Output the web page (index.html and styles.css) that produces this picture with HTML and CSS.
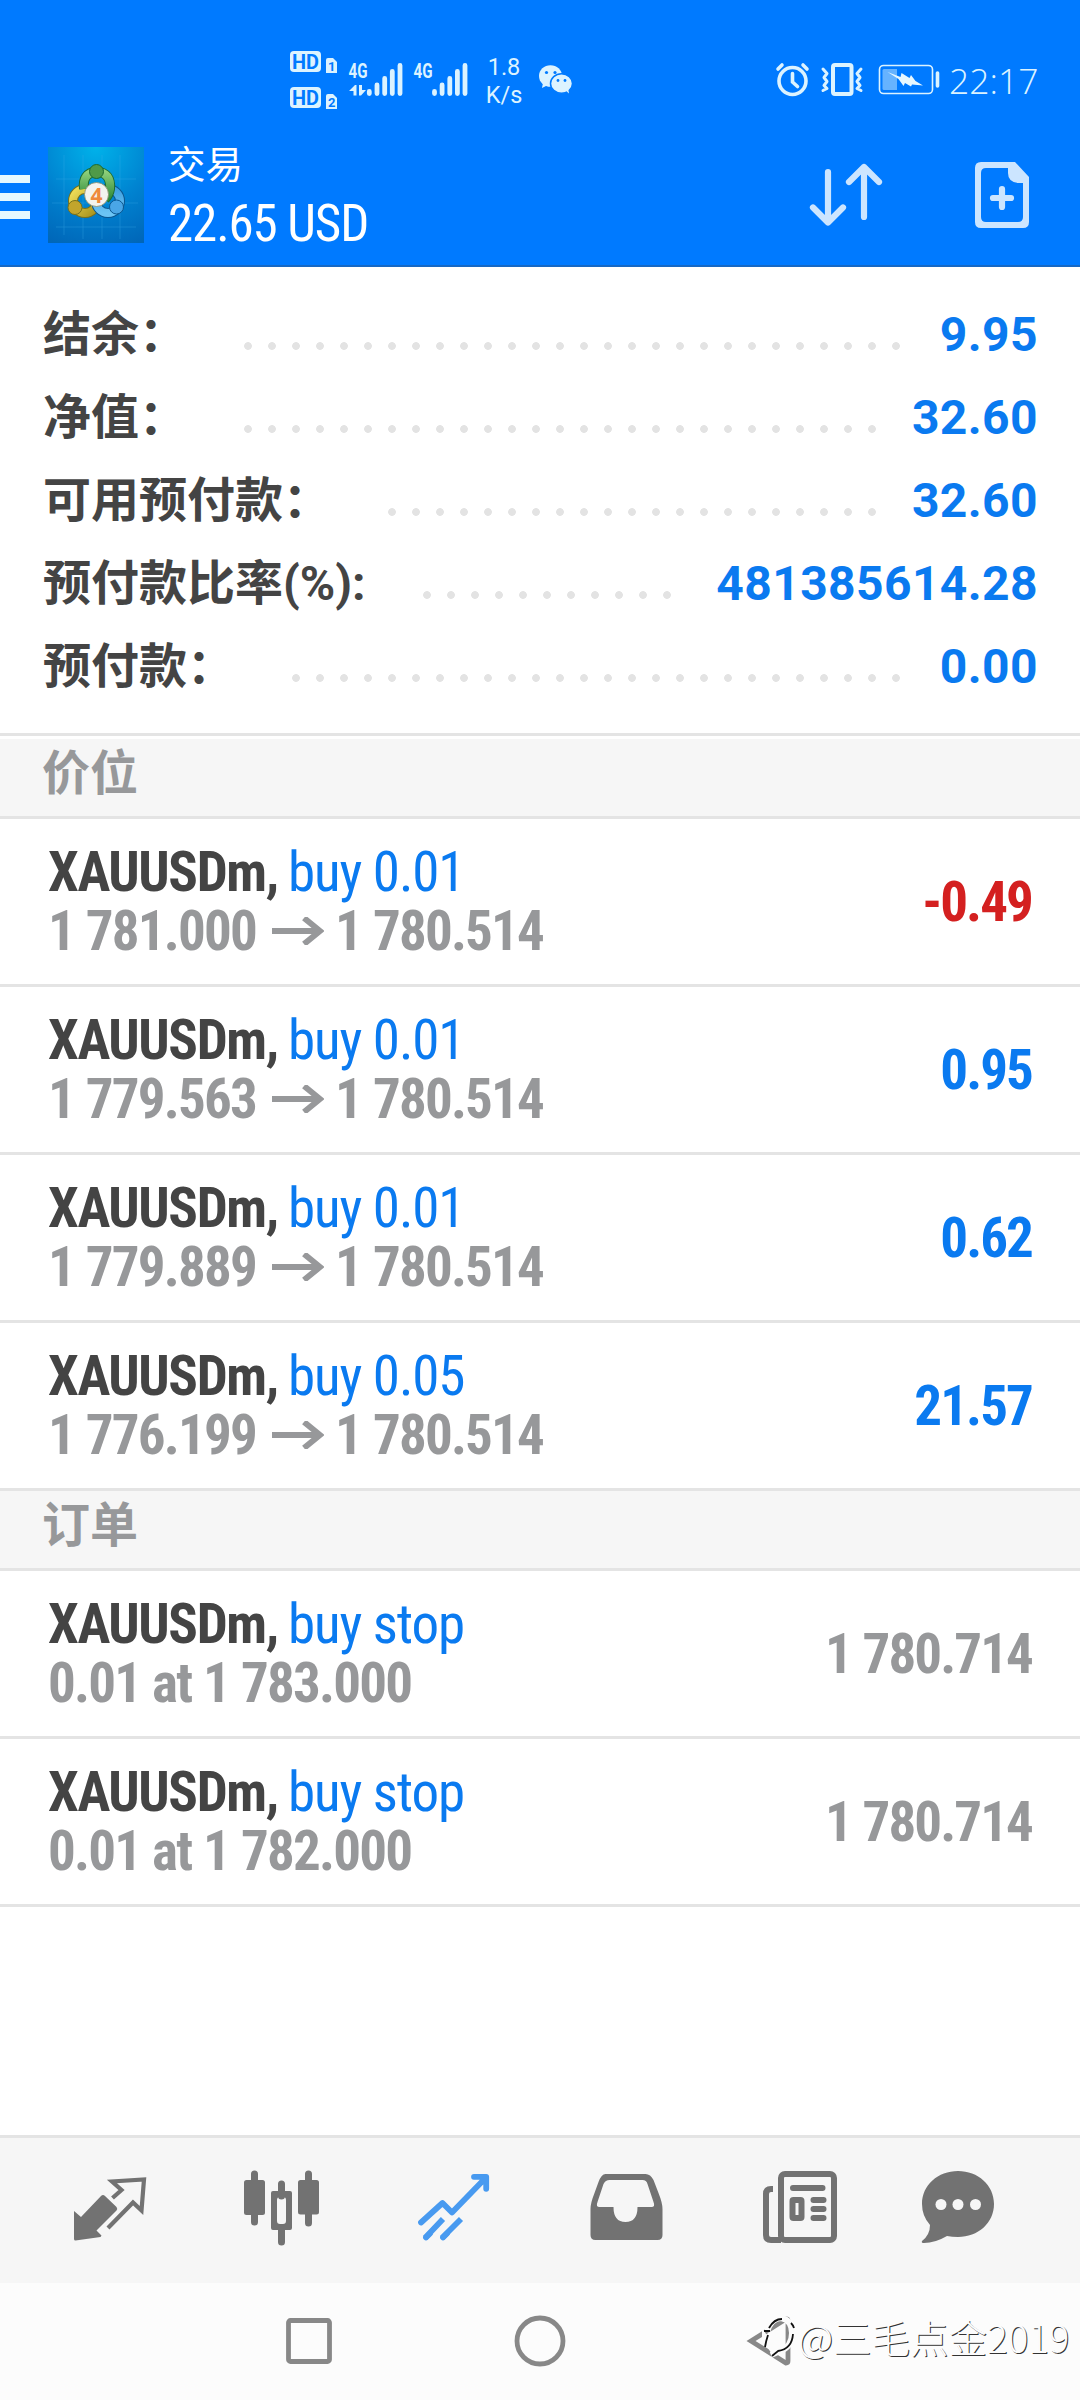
FILE: index.html
```html
<!DOCTYPE html>
<html lang="zh-CN">
<head>
<meta charset="utf-8">
<title>交易</title>
<link rel="stylesheet" href="styles.css">
</head>
<body>
<div class="app">
  <header class="header">
    <div class="status">
      <svg class="status-left" width="320" height="80" viewBox="280 40 320 80">
        <g fill="#dcf3ff">
          <rect x="290" y="51" width="31" height="21" rx="4"/>
          <rect x="290" y="87" width="31" height="21" rx="4"/>
          <path d="M326 60q0-2 2-2h5l4 4v11h-11z"/>
          <path d="M326 96q0-2 2-2h5l4 4v11h-11z"/>
        </g>
        <g class="badge-text">
          <text x="292" y="69" font-size="21" textLength="27" lengthAdjust="spacingAndGlyphs">HD</text>
          <text x="292" y="105" font-size="21" textLength="27" lengthAdjust="spacingAndGlyphs">HD</text>
          <text x="328" y="71" font-size="13">1</text>
          <text x="328" y="107" font-size="13">2</text>
        </g>
        <g class="net-text">
          <text x="348.500" y="78" font-size="20" textLength="19" lengthAdjust="spacingAndGlyphs">4G</text>
          <text x="413.500" y="78" font-size="20" textLength="19" lengthAdjust="spacingAndGlyphs">4G</text>
        </g>
        <path d="M349 91l6-6h1.500v10.500H353.500V91zM359 85h3v5h4l-5 5.500h-2z" fill="#dcf3ff"/>
        <path d="M369.300 91.500v2M377 85v8.500M384.700 78.500v15M392.300 71.500v22M400 65.500v28M434.500 91.500v2M442.100 85v8.500M449.800 78.500v15M457.400 71.500v22M465 65.500v28" stroke="#dcf3ff" stroke-width="4.800" stroke-linecap="round"/>
        <g class="speed-text">
          <text x="504" y="75" font-size="23.500" text-anchor="middle">1.8</text>
          <text x="504" y="103" font-size="23.500" text-anchor="middle">K/s</text>
        </g>
        <g fill="#dcf3ff">
          <ellipse cx="550.500" cy="76" rx="11.500" ry="10.800"/>
          <path d="M543 83l-1 5 6-3z"/>
          <ellipse cx="561.500" cy="83.500" rx="11" ry="9.800" stroke="#007aff" stroke-width="1.500"/>
          <path d="M565 90l4 3.500-1-6z"/>
        </g>
        <g fill="#007aff"><circle cx="546.500" cy="72.500" r="1.600"/><circle cx="555" cy="72.500" r="1.600"/><circle cx="558" cy="80.500" r="1.400"/><circle cx="565" cy="80.500" r="1.400"/></g>
      </svg>
      <svg class="status-right" width="172" height="50" viewBox="772 56 172 50" fill="none" stroke="#dcf3ff" stroke-linecap="round">
        <circle cx="792.500" cy="81" r="13.500" stroke-width="3.600"/>
        <path d="M792.500 73.500v8.500l5 4.500" stroke-width="3.600"/>
        <path d="M778 69l4-4M807 69l-4-4" stroke-width="3.600"/>
        <rect x="833" y="65" width="18.500" height="29" rx="2" stroke-width="4"/>
        <path d="M823 69l4 4.500-3 4 3 4-3 4 3 3-4 2M861 69l-4 4.500 3 4-3 4 3 4-3 3 4 2" stroke-width="3" stroke-linejoin="round"/>
        <rect x="879.500" y="65.500" width="53" height="28" rx="4" stroke-width="1.600"/>
        <path d="M882.500 70.500q0-1.500 1.500-1.500h13v21h-13q-1.500 0-1.500-1.500z" fill="#66b3ff" stroke="none"/>
        <path d="M887.500 72l13 5 1-4 8 5 1.500-3 4.500 6 7.500 4.500-11-1-1 2-6-3.500-1.500 3-5-7z" fill="#e8f8ff" stroke="none"/>
        <path d="M937.500 73v13" stroke-width="3.600"/>
      </svg>
      <span class="clock">22:17</span>
    </div>
    <div class="toolbar">
      <div class="menu"><i></i><i></i><i></i></div>
      <svg class="logo" width="96" height="96" viewBox="0 0 96 96">
        <defs>
          <radialGradient id="bg" cx=".5" cy="0" r="1.100"><stop offset="0" stop-color="#00b2ea"/><stop offset=".55" stop-color="#0082d0"/><stop offset="1" stop-color="#0066b8"/></radialGradient>
          <linearGradient id="gr" x2="0" y2="1"><stop offset="0" stop-color="#8fd07a"/><stop offset="1" stop-color="#2f8a3a"/></linearGradient>
          <linearGradient id="ye" x2="1" y2="1"><stop offset="0" stop-color="#f0e05a"/><stop offset="1" stop-color="#a8921c"/></linearGradient>
          <linearGradient id="bl" x2="0" y2="1"><stop offset="0" stop-color="#3fa0e0"/><stop offset="1" stop-color="#6cc4f4"/></linearGradient>
        </defs>
        <rect width="96" height="96" fill="url(#bg)"/>
        <path d="M16 8v80M35 8v84M54 8v84M72 8v84M8 32h80M4 56h86M8 80h80" stroke="#3fb0ea" stroke-width=".6" opacity=".5"/>
        <circle cx="37" cy="54" r="12" fill="none" stroke="#76701c" stroke-width="10"/>
        <circle cx="37" cy="54" r="12" fill="none" stroke="url(#ye)" stroke-width="8"/>
        <circle cx="60" cy="54" r="12" fill="none" stroke="#0b5790" stroke-width="10"/>
        <circle cx="60" cy="54" r="12" fill="none" stroke="url(#bl)" stroke-width="8"/>
        <path d="M36 42q-2-16 12.500-17.500 15 1.500 13.500 17.500-1 6-5 10" fill="none" stroke="#1c6a30" stroke-width="10"/>
        <path d="M36 42q-2-16 12.500-17.500 15 1.500 13.500 17.500-1 6-5 10" fill="none" stroke="url(#gr)" stroke-width="8"/>
        <circle cx="48.500" cy="24.500" r="7" fill="#4f9a48" stroke="#1c6a30"/>
        <circle cx="27" cy="60.500" r="7" fill="#c2a52c" stroke="#76701c"/>
        <circle cx="68.500" cy="60" r="7" fill="#4aa6e6" stroke="#0b5790"/>
        <circle cx="48.500" cy="47.500" r="12" fill="#f3f3ee" stroke="#8b8b6a" stroke-width=".8"/>
        <text class="logo-num" x="48.500" y="55.500" text-anchor="middle">4</text>
      </svg>
      <div class="titles">
        <div class="title">交易</div>
        <div class="total">22.65 USD</div>
      </div>
      <svg class="actions" width="230" height="80" viewBox="804 156 230 80" fill="none" stroke="#cce5ff" stroke-width="6.200" stroke-linecap="round" stroke-linejoin="round">
        <path d="M828 172v50M813 207.500l15 15 15-15M864 217v-50M849 182l15-15 15 15"/>
        <path fill="#cce5ff" stroke="none" fill-rule="evenodd" d="M981 162h34l14 15v45q0 6-6 6h-42q-6 0-6-6v-54q0-6 6-6zM986 168q-5 0-5 5v44q0 5 5 5h32q5 0 5-5v-34h-5q-10-1-10-10v-5z"/>
        <path d="M993 198h18M1002 189v18"/>
      </svg>
    </div>
  </header>

  <section class="summary">
    <div class="sum-row"><span class="label">结余：</span><span class="leader dots-28"></span><span class="amount w-s">9.95</span></div>
    <div class="sum-row"><span class="label">净值：</span><span class="leader dots-27"></span><span class="amount w-m">32.60</span></div>
    <div class="sum-row"><span class="label">可用预付款：</span><span class="leader dots-21"></span><span class="amount w-m">32.60</span></div>
    <div class="sum-row"><span class="label">预付款比率(%):</span><span class="leader dots-11"></span><span class="amount w-l">481385614.28</span></div>
    <div class="sum-row"><span class="label">预付款：</span><span class="leader dots-26"></span><span class="amount w-s">0.00</span></div>
  </section>

  <h2 class="group group-first">价位</h2>
  <div class="row"><div class="info"><div class="deal"><b>XAUUSDm,</b> <span class="side">buy 0.01</span></div><div class="prices">1 781.000<svg class="arrow" viewBox="0 0 52 28"><path d="M0 14h48M32 1l16 13-16 13"/></svg>1 780.514</div></div><div class="profit loss">-0.49</div></div>
  <div class="row"><div class="info"><div class="deal"><b>XAUUSDm,</b> <span class="side">buy 0.01</span></div><div class="prices">1 779.563<svg class="arrow" viewBox="0 0 52 28"><path d="M0 14h48M32 1l16 13-16 13"/></svg>1 780.514</div></div><div class="profit">0.95</div></div>
  <div class="row"><div class="info"><div class="deal"><b>XAUUSDm,</b> <span class="side">buy 0.01</span></div><div class="prices">1 779.889<svg class="arrow" viewBox="0 0 52 28"><path d="M0 14h48M32 1l16 13-16 13"/></svg>1 780.514</div></div><div class="profit">0.62</div></div>
  <div class="row"><div class="info"><div class="deal"><b>XAUUSDm,</b> <span class="side">buy 0.05</span></div><div class="prices">1 776.199<svg class="arrow" viewBox="0 0 52 28"><path d="M0 14h48M32 1l16 13-16 13"/></svg>1 780.514</div></div><div class="profit">21.57</div></div>
  <h2 class="group">订单</h2>
  <div class="row"><div class="info"><div class="deal"><b>XAUUSDm,</b> <span class="side">buy stop</span></div><div class="prices">0.01 at 1 783.000</div></div><div class="profit quote">1 780.714</div></div>
  <div class="row"><div class="info"><div class="deal"><b>XAUUSDm,</b> <span class="side">buy stop</span></div><div class="prices">0.01 at 1 782.000</div></div><div class="profit quote">1 780.714</div></div>

  <nav class="tabs">
    <svg viewBox="54 2152 112 112"><path fill="#727272" d="M74 2211l7 6 20-21q2-2 4 0l11.500 11q1.500 2 0 3.500l-20 20 5 5-1 1.500-25 3.500q-1.500 0-1.500-1.500z"/><path fill="none" stroke="#727272" stroke-width="4.200" d="M112.500 2198l9-8-9.500-8.500 32-2-2.500 31-8.500-8L108 2228"/></svg>
    <svg viewBox="227 2152 112 112" fill="#727272"><rect x="244" y="2180" width="21" height="35" rx="2.500"/><rect x="298" y="2180" width="21" height="34.500" rx="2.500"/><path d="M254.500 2174v48M308.500 2174v49M281.500 2184v12M281.500 2228v14" stroke="#727272" stroke-width="7" stroke-linecap="round"/><path fill-rule="evenodd" d="M273 2191h17q2 0 2 2v35q0 2-2 2h-17q-2 0-2-2v-35q0-2 2-2zM280 2197q-3 0-3 3v21q0 3 3 3h3q3 0 3-3v-21q0-3-3-3z"/></svg>
    <svg viewBox="400 2152 112 112" fill="none" stroke="#489af0" stroke-width="5.800" stroke-linecap="round" stroke-linejoin="round"><path d="M421 2222.500l21.500-19.500 9.500 9.500 34-35M474 2176.800h12.200v12"/><path stroke-linecap="butt" d="M425 2238l18-19M442 2238l19-19"/><path d="M426 2237.500l4-4M443 2237.500l4-4"/></svg>
    <svg viewBox="573.500 2152 112 112"><path fill="#727272" fill-rule="evenodd" d="M606 2174h40q5 0 8 6l5 13q4 10 4 16v26q0 5-5 5h-62q-5 0-5-5v-26q0-6 4-16l4-11q3-8 7-8zM610 2180q-4 0-6 4l-6 18q-2 5 2 5h14q0 15 12 15t12-15h14q4 0 2-5l-6-18q-1-4-5-4z"/></svg>
    <svg viewBox="746 2152 112 112" fill="none" stroke="#727272" stroke-width="6"><rect x="781" y="2174" width="53" height="66" rx="4"/><path d="M773 2189h-2q-5 0-5 5v41q0 5 5 5h10"/><path d="M793 2188h29.500M813.500 2200h10M813.500 2209h10M813.500 2218h10" stroke-linecap="round"/><rect x="792.500" y="2200" width="9" height="18" rx="1"/></svg>
    <svg viewBox="919 2152 112 112"><path fill="#727272" d="M958 2171c20 0 36 14 36 33s-16 33-36 33q-6 0-11-1-12 7-23 7-3 0-2-2 8-6 8-16-8-9-8-21c0-19 16-33 36-33z"/><g fill="#f6f6f6"><circle cx="941" cy="2204.500" r="5.500"/><circle cx="958" cy="2204.500" r="5.500"/><circle cx="975.500" cy="2204.500" r="5.500"/></g></svg>
  </nav>
  <footer class="sysnav">
    <svg width="52" height="52" viewBox="283 2315 52 52"><rect x="288.500" y="2320.500" width="41" height="41" rx="2" /></svg>
    <svg width="52" height="52" viewBox="514 2315 52 52"><circle cx="540" cy="2341" r="23"/></svg>
    <svg width="52" height="52" viewBox="745 2315 52 52"><path d="M786 2319l-35 22 35 22q2 0 2-2v-40q0-2-2-2z"/></svg>
    <div class="watermark"><svg width="34" height="44" viewBox="762 2320 34 44"><path d="M767 2338q4-14 14-14 11 2 11 15 0 14-12 18l-9 4M760 2336l14 22" stroke="#fcfcfc" stroke-width="6"/><path d="M764 2337h6M768 2341q-2 6-3 12M769 2334q5-9 13-9M793 2340q-1 15-15 17l-6 5M794 2334q-1-3-3-5" stroke="#111" stroke-width="1.800"/></svg><span>@三毛点金2019</span></div>
  </footer>
</div>
</body>
</html>
```
FILE: styles.css
```css
* { box-sizing: border-box; }
body { margin: 0; background: #fff; font-family: Roboto, "Noto Sans CJK SC", sans-serif; }
.app { width: 1080px; height: 2400px; display: flex; flex-direction: column; overflow: hidden; }
svg { display: block; flex: none; }

.header { height: 267px; background: #007aff; border-bottom: 2px solid #1668c4; color: #fff; }
.status { height: 120px; padding: 40px 40px 0 280px; display: flex; align-items: flex-start; }
.status-right { margin: 16px 0 0 172px; }
.clock { margin: 15px 0 0 5px; font: 300 35.500px/50px "Open Sans", sans-serif; color: #dcf3ff; }
.badge-text { fill: #007aff; font-weight: 700; }
.net-text { fill: #dcf3ff; font-weight: 700; }
.speed-text { fill: #dcf3ff; }
.toolbar { display: flex; align-items: flex-start; padding-right: 46px; }
.menu { width: 30px; margin-top: 55px; display: grid; gap: 10px; }
.menu i { height: 8px; background: #e6f8ff; }
.logo { margin: 27px 24px 0 18px; }
.logo-num { font: 700 21px "Open Sans", sans-serif; fill: #ef8a3c; }
.titles { padding-top: 21px; }
.title { font-size: 37.500px; line-height: 48px; }
.total { font-size: 51px; line-height: 60px; font-stretch: 75%; font-family: "Roboto Condensed", Roboto; margin-top: 5px; letter-spacing: -1.100px; }
.actions { margin: 36px 0 0 auto; }

.summary { height: 466px; padding: 26px 42px 0 43px; }
.sum-row { height: 83px; display: flex; align-items: center; }
.label { font: 700 48px/83px Roboto, "Noto Sans CJK SC", sans-serif; color: #444; margin-right: auto; white-space: nowrap; }
.leader { height: 8px; margin-top: 22px; background: radial-gradient(circle, #e3e3e3 3.500px, transparent 4.200px) 0 0 / 24px 8px; }
.dots-28 { width: 672px; }
.dots-27 { width: 648px; }
.dots-26 { width: 624px; }
.dots-21 { width: 504px; }
.dots-11 { width: 264px; }
.amount { font-size: 48px; font-weight: 700; color: #0a7af0; text-align: right; letter-spacing: .4px; }
.w-s { width: 130px; }
.w-m { width: 154px; }
.w-l { width: 359px; }

.group { margin: 0; height: 80px; padding-left: 42px; background: #f6f6f6; border-bottom: 3px solid #e4e4e4; font: 700 48px/61px "Noto Sans CJK SC", sans-serif; color: #97989a; }
.group-first { height: 86px; border-top: 3px solid #e4e4e4; box-shadow: inset 0 3px #fff; padding-top: 3px; }
.row { height: 168px; flex: none; padding: 0 48px; border-bottom: 3px solid #e4e4e4; display: flex; justify-content: space-between; align-items: center; font: 400 55px/59px "Roboto Condensed", Roboto; font-stretch: 75%; white-space: nowrap; }
.deal { letter-spacing: -1.400px; }
.row b { font-weight: 700; color: #444; }
.side { color: #0a7af0; margin-left: -1px; letter-spacing: -1.100px; }
.prices { display: flex; align-items: center; font-weight: 700; color: #97989a; letter-spacing: -1.800px; word-spacing: 1px; }
.arrow { width: 52px; height: 28px; margin: 0 11px 0 16px; fill: none; stroke: #97989a; stroke-width: 6; }
.profit { padding-top: 2px; font-weight: 700; color: #0a7af0; letter-spacing: -1.900px; word-spacing: 1px; }
.loss { color: #d42020; }
.quote { color: #97989a; }

.tabs { margin-top: auto; height: 148px; flex: none; background: #f6f6f6; border-top: 3px solid #e4e4e4; padding: 14px 0 0 54px; display: flex; gap: 61px; }
.tabs svg { width: 112px; height: 112px; }
.sysnav { position: relative; height: 117px; flex: none; background: #fcfcfc; padding: 32px 283px 0; display: flex; justify-content: space-between; }
.sysnav svg { fill: none; stroke: #888; stroke-width: 4.800; }
.watermark { position: absolute; left: 762px; top: 26px; display: flex; align-items: center; gap: 2px; font: 300 38.500px/54px "Noto Sans CJK SC", sans-serif; color: #fcfcfc; text-shadow: 1px 1px 0 #333; white-space: nowrap; }
```
